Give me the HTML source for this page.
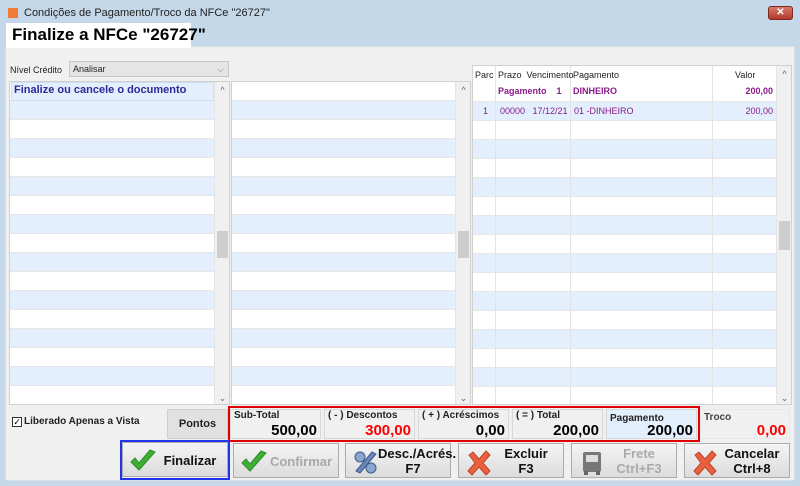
<!DOCTYPE html>
<html><head><meta charset="utf-8"><style>
*{box-sizing:border-box;margin:0;padding:0}
body{width:800px;height:486px;background:#c4d8ea;font-family:"Liberation Sans",sans-serif;position:relative;overflow:hidden;font-size:11px}
.a{position:absolute}
.grid{position:absolute;border:1px solid #d0d0d0;background:#fff;overflow:hidden}
.rows{position:absolute;left:0;right:0;background:repeating-linear-gradient(to bottom,#fff 0,#fff 18px,#e6e6e6 18px,#e6e6e6 19px,#e3effc 19px,#e3effc 37px,#e6e6e6 37px,#e6e6e6 38px)}
.sb{position:absolute;background:#f0f0f0;border-left:1px solid #e4e4e4}
.thumb{position:absolute;left:2px;right:2px;background:#cdcdcd}
.arr{position:absolute;left:0;right:0;text-align:center;color:#606060;font-size:9px}
.box{position:absolute;top:409px;height:30px;background:#f0f0f0;border:1px solid #d8d8d8}
.box .l{position:absolute;left:3px;top:0;font-size:10px;font-weight:bold;color:#222}
.box .v{position:absolute;right:3px;top:12px;font-size:15px;font-weight:bold;color:#000}
.btn{position:absolute;top:443px;height:35px;width:106px;background:linear-gradient(#f4f4f4,#dcdcdc);border:1px solid #acacac;font-weight:bold;font-size:13px;color:#111}
.btn .t{position:absolute;left:32px;right:2px;text-align:center;line-height:15px;white-space:nowrap}
.btn svg{position:absolute;left:6px;top:5px}
</style></head><body>
<!-- title -->
<div class="a" style="left:8px;top:8px;width:10px;height:10px;background:#f27b3a"></div>
<div class="a" style="left:24px;top:7px;font-size:11px;color:#222">Condições de Pagamento/Troco da NFCe "26727"</div>
<div class="a" style="left:768px;top:6px;width:25px;height:14px;background:linear-gradient(#d9786c,#b23b2c);border:1px solid #7a2a20;border-radius:3px;color:#fff;font-size:10px;text-align:center;line-height:12px;font-weight:bold">✕</div>
<!-- panel -->
<div class="a" style="left:5px;top:46px;width:790px;height:435px;background:#f0f0f0;border:1px solid #d7dde5"></div>
<div class="a" style="left:6px;top:23px;width:185px;height:25px;background:#fff"></div>
<div class="a" style="left:12px;top:25px;font-size:17px;font-weight:bold;color:#000">Finalize a NFCe "26727"</div>
<div class="a" style="left:10px;top:65px;font-size:9px;color:#222">Nível Crédito</div>
<div class="a" style="left:69px;top:61px;width:160px;height:16px;background:#e5e5e5;border:1px solid #c6c6c6;font-size:9px;padding-left:3px;line-height:14px;color:#222">Analisar<span style="position:absolute;right:4px;color:#777">⌵</span></div>
<!-- left grid -->
<div class="grid" style="left:9px;top:81px;width:221px;height:324px">
 <div class="rows" style="top:0;height:324px"></div>
 <div class="a" style="left:1px;top:0;width:203px;height:19px;background:#e3effc;border:1px solid #cfe0f0;color:#2a2a9a;font-weight:bold;font-size:11px;padding-left:2px;line-height:15px">Finalize ou cancele o documento</div>
 <div class="sb" style="left:204px;top:0;width:16px;height:324px"><div class="arr" style="top:3px">^</div><div class="thumb" style="top:149px;height:27px"></div><div class="arr" style="bottom:2px">⌄</div></div>
</div>
<!-- middle grid -->
<div class="grid" style="left:231px;top:81px;width:240px;height:324px">
 <div class="rows" style="top:0;height:324px"></div>
 <div class="sb" style="left:223px;top:0;width:16px;height:324px"><div class="arr" style="top:3px">^</div><div class="thumb" style="top:149px;height:27px"></div><div class="arr" style="bottom:2px">⌄</div></div>
</div>
<!-- right grid -->
<div class="grid" style="left:472px;top:65px;width:320px;height:340px">
 <div class="a" style="left:0;top:0;width:304px;height:36px;background:#fff"></div>
 <div class="rows" style="top:36px;height:304px;background:repeating-linear-gradient(to bottom,#e3effc 0,#e3effc 18px,#e6e6e6 18px,#e6e6e6 19px,#fff 19px,#fff 37px,#e6e6e6 37px,#e6e6e6 38px)"></div>
 <div class="a" style="left:0;top:17px;width:304px;height:19px;border-bottom:1px solid #e6e6e6"></div>
 <div class="a" style="left:22px;top:0;width:1px;height:340px;background:#e3e3e3"></div>
 <div class="a" style="left:97px;top:0;width:1px;height:340px;background:#e3e3e3"></div>
 <div class="a" style="left:239px;top:0;width:1px;height:340px;background:#e3e3e3"></div>
 <div class="a" style="left:2px;top:4px;font-size:9px;color:#222">Parc</div>
 <div class="a" style="left:25px;top:4px;font-size:9px;color:#222">Prazo&nbsp; Vencimento</div>
 <div class="a" style="left:100px;top:4px;font-size:9px;color:#222">Pagamento</div>
 <div class="a" style="left:262px;top:4px;font-size:9px;color:#222">Valor</div>
 <div class="a" style="left:25px;top:20px;font-size:9px;font-weight:bold;color:#8a1a8a">Pagamento&nbsp;&nbsp;&nbsp; 1</div>
 <div class="a" style="left:100px;top:20px;font-size:9px;font-weight:bold;color:#8a1a8a">DINHEIRO</div>
 <div class="a" style="right:18px;top:20px;font-size:9px;font-weight:bold;color:#8a1a8a">200,00</div>
 <div class="a" style="left:10px;top:40px;font-size:9px;color:#8a1a8a">1</div>
 <div class="a" style="left:27px;top:40px;font-size:9px;color:#8a1a8a">00000&nbsp;&nbsp; 17/12/21</div>
 <div class="a" style="left:101px;top:40px;font-size:9px;color:#8a1a8a">01 -DINHEIRO</div>
 <div class="a" style="right:18px;top:40px;font-size:9px;color:#8a1a8a">200,00</div>
 <div class="sb" style="left:303px;top:0;width:16px;height:340px"><div class="arr" style="top:3px">^</div><div class="thumb" style="top:155px;height:29px"></div><div class="arr" style="bottom:2px">⌄</div></div>
</div>
<!-- bottom -->
<div class="a" style="left:12px;top:417px;width:10px;height:10px;border:1px solid #333;background:#fff;font-size:9px;line-height:8px;text-align:center">✓</div>
<div class="a" style="left:24px;top:416px;font-size:10px;font-weight:bold;color:#222">Liberado Apenas a Vista</div>
<div class="a" style="left:167px;top:409px;width:61px;height:30px;background:#e1e1e1;border:1px solid #cfcfcf;font-size:11px;font-weight:bold;text-align:center;line-height:28px;color:#222">Pontos</div>
<div class="box" style="left:230px;width:91px"><div class="l">Sub-Total</div><div class="v">500,00</div></div>
<div class="box" style="left:324px;width:91px"><div class="l">( - ) Descontos</div><div class="v" style="color:#f00">300,00</div></div>
<div class="box" style="left:418px;width:91px"><div class="l">( + ) Acréscimos</div><div class="v">0,00</div></div>
<div class="box" style="left:512px;width:91px"><div class="l">( = ) Total</div><div class="v">200,00</div></div>
<div class="box" style="left:606px;width:91px;background:#e3effc"><div class="l" style="top:3px">Pagamento</div><div class="v">200,00</div></div>
<div class="box" style="left:700px;width:90px;border-color:#e8e8e8"><div class="l" style="top:2px;color:#444">Troco</div><div class="v" style="color:#f00">0,00</div></div>
<div class="a" style="left:228px;top:406px;width:472px;height:36px;border:2px solid #e00000"></div>
<div class="a" style="left:120px;top:440px;width:110px;height:40px;border:2px solid #2233ee"></div>
<div class="btn" style="left:122px;top:442px;width:106px"><svg width="28" height="26" viewBox="0 0 28 26"><path d="M2 14 L10 22 L26 4 L21 2 L10 15 L6 10 Z" fill="#3fae35" stroke="#2c8c28"/></svg><div class="t" style="top:10px">Finalizar</div></div>
<div class="btn" style="left:233px;color:#a8a8a8"><svg width="28" height="26" viewBox="0 0 28 26"><path d="M2 14 L10 22 L26 4 L21 2 L10 15 L6 10 Z" fill="#3fae35" stroke="#2c8c28"/></svg><div class="t" style="top:10px">Confirmar</div></div>
<div class="btn" style="left:345px"><svg width="28" height="26" viewBox="0 0 28 26"><circle cx="8" cy="8" r="5" fill="#8aa6cf" stroke="#3c5a8c"/><circle cx="19" cy="19" r="5" fill="#8aa6cf" stroke="#3c5a8c"/><path d="M20 3 L24 5 L8 24 L4 22 Z" fill="#6b86b8" stroke="#3c5a8c"/></svg><div class="t" style="top:2px">Desc./Acrés.<br>F7</div></div>
<div class="btn" style="left:458px"><svg width="28" height="28" viewBox="0 0 28 28"><path d="M4 6 L8 3 L14 10 L21 2 L25 6 L18 14 L25 22 L21 26 L14 18 L7 26 L3 22 L10 14 Z" fill="#e8603e" stroke="#c0452a"/></svg><div class="t" style="top:2px">Excluir<br>F3</div></div>
<div class="btn" style="left:571px;color:#aaa"><svg width="28" height="28" viewBox="0 0 28 28"><rect x="5" y="3" width="18" height="20" rx="2" fill="#777"/><rect x="8" y="6" width="12" height="7" fill="#ddd"/><rect x="6" y="22" width="4" height="4" fill="#666"/><rect x="18" y="22" width="4" height="4" fill="#666"/></svg><div class="t" style="top:2px">Frete<br>Ctrl+F3</div></div>
<div class="btn" style="left:684px"><svg width="28" height="28" viewBox="0 0 28 28"><path d="M4 6 L8 3 L14 10 L21 2 L25 6 L18 14 L25 22 L21 26 L14 18 L7 26 L3 22 L10 14 Z" fill="#e8603e" stroke="#c0452a"/></svg><div class="t" style="top:2px">Cancelar<br>Ctrl+8</div></div>
</body></html>
